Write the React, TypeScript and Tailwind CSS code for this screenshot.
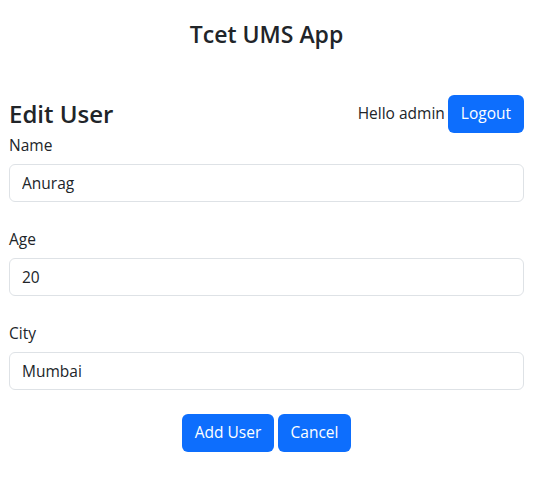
import { useState } from "react"

const FIELDS = [
  { id: "name", label: "Name", value: "Anurag" },
  { id: "age", label: "Age", value: "20" },
  { id: "city", label: "City", value: "Mumbai" },
]

export default function App() {
  const [values, setValues] = useState<Record<string, string>>(
    Object.fromEntries(FIELDS.map((f) => [f.id, f.value]))
  )

  return (
    <div
      className="min-h-screen bg-white pl-[9px] pr-[16px] text-[#212529]"
      style={{ fontFamily: '"Segoe UI", "Open Sans", "Noto Sans", sans-serif' }}
    >
      <h3 className="pt-[20px] text-center text-[23px] font-semibold leading-[28px]">Tcet UMS App</h3>

      <div className="mt-[47px] flex h-[38px] items-center justify-between">
        <h2 className="text-[24px] font-semibold leading-[1.2]">Edit User</h2>
        <div className="flex items-center">
          <span className="text-[15.5px]">Hello admin</span>
          <button className="ml-[3px] h-[38px] rounded-[6px] bg-[#0d6efd] px-[13px] text-[15.5px] text-white">
            Logout
          </button>
        </div>
      </div>

      <form onSubmit={(e) => e.preventDefault()}>
        <div className="flex flex-col gap-[25px]">
          {FIELDS.map((f) => (
            <div key={f.id}>
              <label htmlFor={f.id} className="mb-[7px] block text-[15.5px] leading-[24px]">
                {f.label}
              </label>
              <input
                id={f.id}
                value={values[f.id]}
                onChange={(e) => setValues({ ...values, [f.id]: e.target.value })}
                className="block h-[38px] w-full rounded-[6px] border border-[#dee2e6] px-[12px] text-[15.5px] leading-[24px] text-[#212529] outline-none"
              />
            </div>
          ))}
        </div>

        <div className="mt-[24px] flex justify-center gap-[4px]">
          <button className="h-[38px] w-[92px] rounded-[6px] bg-[#0d6efd] text-[15.5px] text-white">Add User</button>
          <button className="h-[38px] w-[73px] rounded-[6px] bg-[#0d6efd] text-[15.5px] text-white">Cancel</button>
        </div>
      </form>
    </div>
  )
}
